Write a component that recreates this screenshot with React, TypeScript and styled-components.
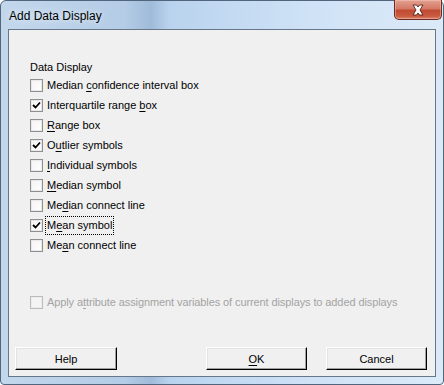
import React from 'react';
import styled, { createGlobalStyle } from 'styled-components';

const Global = createGlobalStyle`
  html, body { margin: 0; padding: 0; background: #ffffff; }
  body { width: 444px; height: 385px; overflow: hidden; }
`;

const Window = styled.div`
  box-sizing: border-box;
  width: 444px;
  height: 385px;
  display: flex;
  flex-direction: column;
  padding: 0 7px 7px 7px;
  border: 1px solid #51657c;
  border-radius: 6px 6px 4px 4px;
  background: linear-gradient(90deg, #c3d7ec 0%, #b4cce6 28%, #9fbbd9 34%, #b9d3ee 38%, #cfe2f6 70%, #dceaf8 100%);
  font-family: 'Liberation Sans', Arial, sans-serif;
`;

const TitleBar = styled.div`
  height: 28px;
  display: flex;
  justify-content: space-between;
  align-items: flex-start;
`;

const Title = styled.div`
  padding: 8px 0 0 1px;
  font-size: 12px;
  color: #000;
  text-shadow: 0 0 6px rgba(255, 255, 255, 0.9);
`;

const CloseButton = styled.div`
  box-sizing: border-box;
  width: 48px;
  height: 20px;
  margin: -1px -6px 0 0;
  display: flex;
  align-items: center;
  justify-content: center;
  border: 1px solid #6b2a22;
  border-top: none;
  border-radius: 0 0 5px 5px;
  background: linear-gradient(180deg, #e3a292 0%, #d47a65 45%, #c04a33 55%, #c95a40 85%, #d98670 100%);
  box-shadow: inset 0 0 0 1px rgba(255, 210, 200, 0.4);
`;

const Client = styled.div`
  flex: 1;
  display: flex;
  flex-direction: column;
  border: 1px solid #66778a;
  background: #f0f0f0;
  padding: 31px 8px 6px 6px;
  font-size: 11px;
  color: #000;
`;

const Group = styled.div`
  padding-left: 15px;
  display: flex;
  flex-direction: column;
`;

const GroupLabel = styled.div`
  height: 13px;
  line-height: 13px;
  margin-bottom: 1px;
`;

const Row = styled.div<{ $gapTop?: number }>`
  height: 20px;
  display: flex;
  align-items: center;
  margin-top: ${(p) => p.$gapTop ?? 0}px;
`;

const Box = styled.span<{ $disabled?: boolean }>`
  box-sizing: border-box;
  width: 13px;
  height: 13px;
  display: flex;
  align-items: center;
  justify-content: center;
  border: 1px solid ${(p) => (p.$disabled ? '#bcbcbc' : '#8e8f8f')};
  background: ${(p) => (p.$disabled ? '#f4f4f4' : 'linear-gradient(135deg, #f3f3f3 0%, #ffffff 100%)')};
  box-shadow: inset 0 0 0 1px ${(p) => (p.$disabled ? '#ececec' : '#e8e8e8')};
`;

const Label = styled.span<{ $disabled?: boolean; $focused?: boolean }>`
  margin-left: 2px;
  padding: 2px 1px;
  line-height: 13px;
  color: ${(p) => (p.$disabled ? '#a3a3a3' : '#000')};
  letter-spacing: ${(p) => (p.$disabled ? '-0.1px' : '0')};
  border: 1px dotted ${(p) => (p.$focused ? '#000' : 'transparent')};
  white-space: nowrap;
`;

const Key = styled.span`
  text-decoration: underline;
  text-underline-offset: 2px;
`;

const Spacer = styled.div`
  flex: 1;
`;

const ButtonRow = styled.div`
  display: flex;
  justify-content: space-between;
`;

const ButtonGroup = styled.div`
  display: flex;
  gap: 19px;
`;

const Button = styled.div<{ $w: number }>`
  box-sizing: border-box;
  width: ${(p) => p.$w}px;
  height: 23px;
  display: flex;
  align-items: center;
  justify-content: center;
  background: #f0f0f0;
  border: 1px solid;
  border-color: #ffffff #000000 #000000 #ffffff;
  box-shadow: inset -1px -1px 0 #a0a0a0, inset 1px 1px 0 #e3e3e3;
  font-size: 11px;
`;

const Check = () => (
  <svg width="9" height="9" viewBox="0 0 9 9">
    <path d="M1 4 L3.5 6.5 L8 1.5" fill="none" stroke="#000" strokeWidth="1.8" />
  </svg>
);

const CloseX = () => (
  <svg width="16" height="12" viewBox="0 0 16 12">
    <path
      d="M3 1 H6.5 L8 3 L9.5 1 H13 L10 6 L13 11 H9.5 L8 9 L6.5 11 H3 L6 6 Z"
      fill="#ffffff"
      stroke="#5a2018"
      strokeWidth="0.9"
      strokeLinejoin="round"
    />
  </svg>
);

type Item = { pre: string; key: string; post: string; checked?: boolean; focused?: boolean };

const items: Item[] = [
  { pre: 'Median ', key: 'c', post: 'onfidence interval box' },
  { pre: 'Interquartile range ', key: 'b', post: 'ox', checked: true },
  { pre: '', key: 'R', post: 'ange box' },
  { pre: 'O', key: 'u', post: 'tlier symbols', checked: true },
  { pre: '', key: 'I', post: 'ndividual symbols' },
  { pre: '', key: 'M', post: 'edian symbol' },
  { pre: 'Me', key: 'd', post: 'ian connect line' },
  { pre: 'M', key: 'e', post: 'an symbol', checked: true, focused: true },
  { pre: 'Me', key: 'a', post: 'n connect line' },
];

export default function App() {
  return (
    <>
      <Global />
      <Window>
        <TitleBar>
          <Title>Add Data Display</Title>
          <CloseButton>
            <CloseX />
          </CloseButton>
        </TitleBar>
        <Client>
          <Group>
            <GroupLabel>Data Display</GroupLabel>
            {items.map((it) => (
              <Row key={it.pre + it.key + it.post}>
                <Box>{it.checked && <Check />}</Box>
                <Label $focused={it.focused}>
                  {it.pre}
                  <Key>{it.key}</Key>
                  {it.post}
                </Label>
              </Row>
            ))}
            <Row $gapTop={37}>
              <Box $disabled />
              <Label $disabled>
                Apply a<Key>t</Key>tribute assignment variables of current displays to added displays
              </Label>
            </Row>
          </Group>
          <Spacer />
          <ButtonRow>
            <Button $w={102}>Help</Button>
            <ButtonGroup>
              <Button $w={101}>
                <Key>O</Key>K
              </Button>
              <Button $w={101}>Cancel</Button>
            </ButtonGroup>
          </ButtonRow>
        </Client>
      </Window>
    </>
  );
}
